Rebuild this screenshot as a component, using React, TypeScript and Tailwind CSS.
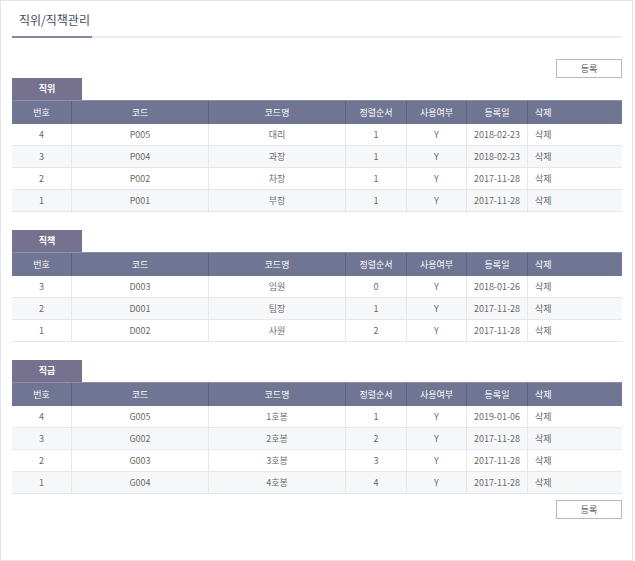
import React from "react";

type Row = [string, string, string, string, string, string];

const font = { fontFamily: '"Noto Sans CJK KR", "Noto Sans", sans-serif' };

const cols = "grid grid-cols-[60px_137px_137px_61px_60px_61px_94px]";

function Table({ tab, rows }: { tab: string; rows: Row[] }) {
  const heads = ["번호", "코드", "코드명", "정렬순서", "사용여부", "등록일"];
  return (
    <div className="flex flex-col">
      <div className="w-[70px] h-[22px] bg-[#75718f] text-white text-[9px] font-bold flex items-center justify-center">
        {tab}
      </div>
      <div className={`${cols} h-[24px] bg-[#6f7592] border-t border-[#8a8fa8] text-white text-[9px]`}>
        {heads.map((h) => (
          <div key={h} className="flex items-center justify-center border-r border-[#5c6282]">
            {h}
          </div>
        ))}
        <div className="flex items-center pl-[7px]">삭제</div>
      </div>
      {rows.map((r, i) => (
        <div
          key={i}
          className={`${cols} h-[22px] border-b border-[#e6e7ec] text-[9px] text-[#6a6a6a] ${
            i % 2 === 1 ? "bg-[#f6f7f9]" : "bg-white"
          }`}
        >
          {r.map((c, j) => (
            <div key={j} className="flex items-center justify-center border-r border-[#e6e7ec]">
              {c}
            </div>
          ))}
          <div className="flex items-center pl-[7px]">삭제</div>
        </div>
      ))}
    </div>
  );
}

function Btn() {
  return (
    <div className="flex justify-end">
      <div className="w-[66px] h-[19px] border border-[#b9b9c2] bg-white text-[9px] text-[#555] flex items-center justify-center">
        등록
      </div>
    </div>
  );
}

export default function App() {
  const t1: Row[] = [
    ["4", "P005", "대리", "1", "Y", "2018-02-23"],
    ["3", "P004", "과장", "1", "Y", "2018-02-23"],
    ["2", "P002", "차장", "1", "Y", "2017-11-28"],
    ["1", "P001", "부장", "1", "Y", "2017-11-28"],
  ];
  const t2: Row[] = [
    ["3", "D003", "임원", "0", "Y", "2018-01-26"],
    ["2", "D001", "팀장", "1", "Y", "2017-11-28"],
    ["1", "D002", "사원", "2", "Y", "2017-11-28"],
  ];
  const t3: Row[] = [
    ["4", "G005", "1호봉", "1", "Y", "2019-01-06"],
    ["3", "G002", "2호봉", "2", "Y", "2017-11-28"],
    ["2", "G003", "3호봉", "3", "Y", "2017-11-28"],
    ["1", "G004", "4호봉", "4", "Y", "2017-11-28"],
  ];
  return (
    <div style={font} className="w-[635px] h-[561px] bg-white">
      <div className="w-[633px] h-[561px] border border-[#e3e3e8] px-[11px] pt-[9px]">
        <div className="text-[12px] leading-[20px] text-[#4a4a62] pl-[7px]">직위/직책관리</div>
        <div className="mt-[6px] h-[2px] bg-[#ebebf0] flex">
          <div className="w-[80px] h-[2px] bg-[#8885a4]" />
        </div>
        <div className="mt-[21px] w-[610px]">
          <Btn />
          <Table tab="직위" rows={t1} />
          <div className="h-[18px]" />
          <Table tab="직책" rows={t2} />
          <div className="h-[18px]" />
          <Table tab="직급" rows={t3} />
          <div className="h-[6px]" />
          <Btn />
        </div>
      </div>
    </div>
  );
}
